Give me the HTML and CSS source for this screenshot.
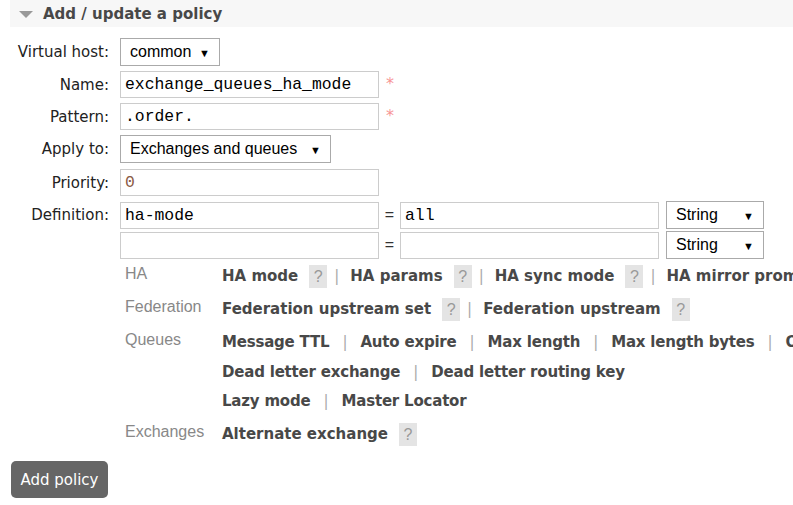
FILE: index.html
```html
<!DOCTYPE html>
<html>
<head>
<meta charset="utf-8">
<link rel="stylesheet" href="styles.css">
</head>
<body>
<div class="section">
  <div class="section-head">
    <span class="tri"></span>
    <h2>Add / update a policy</h2>
  </div>
  <div class="form">
    <div class="row">
      <label class="lbl">Virtual host:</label>
      <div class="sel sel-vhost">common <span class="arr">▼</span></div>
    </div>
    <div class="row">
      <label class="lbl">Name:</label>
      <div class="inp">exchange_queues_ha_mode</div>
      <span class="req">*</span>
    </div>
    <div class="row">
      <label class="lbl">Pattern:</label>
      <div class="inp">.order.</div>
      <span class="req">*</span>
    </div>
    <div class="row row-apply">
      <label class="lbl">Apply to:</label>
      <div class="sel sel-apply">Exchanges and queues <span class="arr">▼</span></div>
    </div>
    <div class="row">
      <label class="lbl">Priority:</label>
      <div class="inp inp-prio">0</div>
    </div>
    <div class="row row-def">
      <label class="lbl">Definition:</label>
      <div class="def">
        <div class="def-line">
          <div class="inp">ha-mode</div>
          <span class="eq">=</span>
          <div class="inp">all</div>
          <div class="sel sel-type">String <span class="arr">▼</span></div>
        </div>
        <div class="def-line">
          <div class="inp"></div>
          <span class="eq">=</span>
          <div class="inp"></div>
          <div class="sel sel-type">String <span class="arr">▼</span></div>
        </div>
      </div>
    </div>
    <div class="help">
      <div class="hgroup">
        <div class="hlabel">HA</div>
        <div class="hlinks">
          <div class="hline"><a>HA mode</a><span class="q">?</span><span class="sep">|</span><a>HA params</a><span class="q">?</span><span class="sep">|</span><a>HA sync mode</a><span class="q">?</span><span class="sep">|</span><a>HA mirror promotion</a></div>
        </div>
      </div>
      <div class="hgroup">
        <div class="hlabel">Federation</div>
        <div class="hlinks">
          <div class="hline"><a>Federation upstream set</a><span class="q">?</span><span class="sep">|</span><a>Federation upstream</a><span class="q">?</span></div>
        </div>
      </div>
      <div class="hgroup">
        <div class="hlabel">Queues</div>
        <div class="hlinks tight">
          <div class="hline"><a>Message TTL</a><span class="sep">|</span><a>Auto expire</a><span class="sep">|</span><a>Max length</a><span class="sep">|</span><a>Max length bytes</a><span class="sep">|</span><a>Overflow behaviour</a></div>
          <div class="hline"><a>Dead letter exchange</a><span class="sep">|</span><a>Dead letter routing key</a></div>
          <div class="hline"><a>Lazy mode</a><span class="sep">|</span><a>Master Locator</a></div>
        </div>
      </div>
      <div class="hgroup">
        <div class="hlabel">Exchanges</div>
        <div class="hlinks">
          <div class="hline"><a>Alternate exchange</a><span class="q">?</span></div>
        </div>
      </div>
    </div>
    <button class="btn">Add policy</button>
  </div>
</div>
</body>
</html>
```

FILE: styles.css
```css
html, body {
  margin: 0;
  padding: 0;
  background: #fff;
  overflow: hidden;
}
body {
  font-family: "DejaVu Sans", Verdana, sans-serif;
  font-size: 15px;
  color: #484848;
  width: 793px;
  height: 505px;
}
.section {
  padding-left: 10px;
}
.section-head {
  display: flex;
  align-items: center;
  height: 27px;
  background: #f7f7f7;
}
.tri {
  width: 0;
  height: 0;
  border-left: 7px solid transparent;
  border-right: 7px solid transparent;
  border-top: 7px solid #999;
  margin-left: 9px;
  margin-right: 10px;
  margin-top: 1px;
}
h2 {
  margin: 0;
  font-size: 15px;
  font-weight: bold;
  color: #484848;
}
.form {
  padding-top: 11px;
}
.row {
  display: flex;
  align-items: center;
  margin-bottom: 5px;
}
.row-apply {
  margin-bottom: 6px;
}
.lbl {
  width: 99px;
  text-align: right;
  padding-right: 11px;
  font-family: "DejaVu Sans", Verdana, sans-serif;
  font-size: 15px;
  color: #222;
  flex: none;
}
.row-def {
  align-items: flex-start;
}
.row-def .lbl {
  padding-top: 5px;
}
.sel {
  box-sizing: border-box;
  height: 28px;
  border: 1px solid #aaa;
  font-family: "Liberation Sans", Arial, sans-serif;
  font-size: 16px;
  color: #000;
  display: flex;
  align-items: center;
  padding-left: 9px;
  background: #fff;
  position: relative;
  flex: none;
}
.arr {
  font-size: 11px;
  position: absolute;
  right: 9px;
  top: 8px;
}
.sel-vhost { width: 100px; }
.sel-apply { width: 211px; }
.sel-type { width: 98px; margin-left: 7px; }
.inp {
  box-sizing: border-box;
  width: 259px;
  height: 27px;
  border: 1px solid #ccc;
  font-family: "Liberation Mono", "Courier New", monospace;
  font-size: 16.4px;
  color: #000;
  padding-left: 4px;
  display: flex;
  align-items: center;
  flex: none;
}
.inp-prio { color: #8a5a44; }
.req {
  color: #f79595;
  margin-left: 7px;
  font-size: 16px;
  align-self: flex-start;
  margin-top: 3px;
}
.def-line {
  display: flex;
  align-items: center;
  margin-bottom: 2px;
}
.def-line:last-child {
  margin-bottom: 0;
}
.eq {
  width: 21px;
  text-align: center;
  color: #333;
  font-family: "Liberation Sans", Arial, sans-serif;
  font-size: 16px;
}
.help {
  padding-left: 115px;
  margin-top: -2px;
}
.hgroup {
  display: flex;
  margin-bottom: 3.5px;
}
.hlabel {
  width: 97px;
  flex: none;
  color: #888;
  font-family: "Liberation Sans", Arial, sans-serif;
  font-size: 16px;
  line-height: 29px;
  margin-top: -3px;
}
.hline {
  white-space: nowrap;
  line-height: 29.5px;
  height: 29.5px;
  font-weight: bold;
}
.hlinks a {
  color: #484848;
}
.tight a {
  letter-spacing: -0.2px;
}
.q {
  display: inline-block;
  background: #e4e4e4;
  color: #999;
  font-weight: normal;
  font-family: "Liberation Sans", Arial, sans-serif;
  font-size: 16px;
  width: 18px;
  height: 23px;
  line-height: 23px;
  text-align: center;
  margin-left: 11px;
  vertical-align: middle;
}
.sep {
  color: #aaa;
  font-weight: normal;
  margin: 0 13px;
}
.q + .sep {
  margin-left: 7px;
  margin-right: 11px;
}
.btn {
  display: block;
  margin-top: 11.5px;
  margin-left: 1px;
  background: #666;
  color: #fff;
  border: none;
  border-radius: 5px;
  font-family: "DejaVu Sans", Verdana, sans-serif;
  font-size: 15px;
  width: 97px;
  height: 37px;
  padding: 0;
}
```
